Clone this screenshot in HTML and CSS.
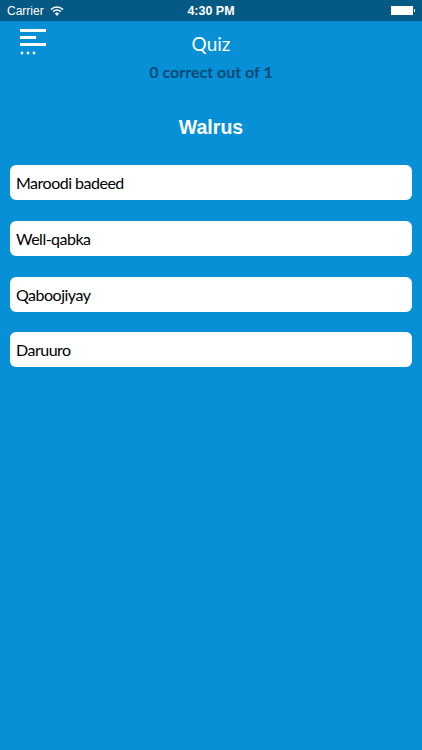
FILE: index.html
```html
<!DOCTYPE html>
<html>
<head>
  <meta name="viewport" content="width=device-width">
  <link rel="stylesheet" href="styles.css">
</head>
<body>

<div class="status-bar">
  <div class="status-left">
    <span>Carrier</span>
    <svg class="wifi" width="14" height="10" viewBox="0 0 14 10">
      <path d="M1 3.6 A8.5 8.5 0 0 1 13 3.6" fill="none" stroke="#fff" stroke-width="1.5"/>
      <path d="M3.2 5.6 A5.4 5.4 0 0 1 10.8 5.6" fill="none" stroke="#fff" stroke-width="1.5"/>
      <path d="M7 10 L4.9 7.6 A3 3 0 0 1 9.1 7.6 Z" fill="#fff"/>
    </svg>
  </div>
  <div class="status-time">4:30 PM</div>
  <div class="status-right">
    <div class="battery"></div>
    <div class="battery-tip"></div>
  </div>
</div>

<div class="header">
  <svg class="menu-icon" width="26" height="26" viewBox="0 0 26 26">
    <rect x="0" y="0" width="26" height="3" fill="#fff"/>
    <rect x="0" y="7" width="16" height="3" fill="#fff"/>
    <rect x="0" y="14" width="26" height="3" fill="#fff"/>
    <circle cx="2" cy="24" r="1.4" fill="#fff"/>
    <circle cx="8" cy="24" r="1.4" fill="#fff"/>
    <circle cx="14" cy="24" r="1.4" fill="#fff"/>
  </svg>
  <h1 class="title">Quiz</h1>
  <p class="score">0 correct out of 1</p>
</div>

<h2 class="word">Walrus</h2>

<div class="answers">
  <div class="answer">Maroodi badeed</div>
  <div class="answer">Well-qabka</div>
  <div class="answer">Qaboojiyay</div>
  <div class="answer">Daruuro</div>
</div>

</body>
</html>
```

FILE: styles.css
```css
html, body {
  height: 100%;
}

body {
  margin: 0;
  background-color: #0790D6;
  font-family: Lato, "Open Sans", sans-serif;
  overflow: hidden;
}

.status-bar {
  display: grid;
  grid-template-columns: 1fr auto 1fr;
  align-items: center;
  height: 21px;
  padding: 0 7px 0 7px;
  background-color: #055A85;
  color: #fff;
  font-family: "Liberation Sans", Arial, sans-serif;
  font-size: 12px;
}

.status-left {
  display: flex;
  align-items: center;
  gap: 6px;
}

.wifi {
  display: block;
}

.status-time {
  font-weight: bold;
  font-size: 12.5px;
}

.status-right {
  display: flex;
  justify-content: flex-end;
  align-items: center;
}

.battery {
  width: 22px;
  height: 9px;
  background-color: #fff;
}

.battery-tip {
  width: 1.5px;
  height: 3px;
  background-color: #fff;
  margin-left: 1px;
}

.header {
  position: relative;
  height: 61px;
  text-align: center;
}

.menu-icon {
  position: absolute;
  left: 20px;
  top: 8px;
}

.title {
  margin: 0;
  padding-top: 12px;
  font-size: 19px;
  line-height: 22px;
  font-weight: normal;
  color: #fff;
}

.score {
  margin: 0;
  padding-top: 7px;
  font-size: 16px;
  line-height: 20px;
  font-weight: bold;
  color: #054A75;
}

.word {
  margin: 0;
  padding-top: 33px;
  text-align: center;
  font-family: "Liberation Sans", Arial, sans-serif;
  font-size: 19.5px;
  line-height: 24px;
  font-weight: bold;
  color: #fff;
}

.answers {
  display: flex;
  flex-direction: column;
  gap: 20.75px;
  margin: 26px 10px 0;
}

.answer {
  height: 35px;
  padding-left: 6px;
  background-color: #fff;
  border-radius: 6px;
  color: #000;
  font-size: 16px;
  letter-spacing: -0.5px;
  line-height: 36px;
}
```
